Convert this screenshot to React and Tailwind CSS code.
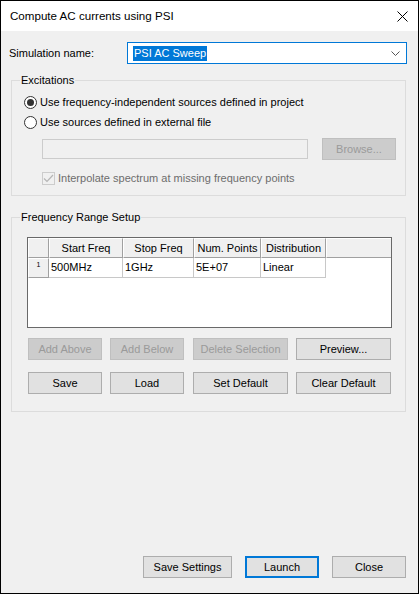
import React from 'react';

const font = { fontFamily: '"Liberation Sans", Arial, sans-serif' };

const Btn = ({ children, w, disabled, primary }) => (
    <div
        className={
            'h-[22px] flex items-center justify-center text-[11px] shrink-0 ' +
            (disabled
                ? 'bg-[#cccccc] border border-[#bfbfbf] text-[#9a9a9a]'
                : primary
                ? 'bg-[#e1e1e1] border-2 border-[#0078d7] text-black'
                : 'bg-[#e1e1e1] border border-[#adadad] text-black')
        }
        style={{ width: w }}
    >
        {children}
    </div>
);

const Radio = ({ checked, label }) => (
    <div className="flex items-center h-[16px]">
        <div className="w-[13px] h-[13px] rounded-full border border-[#333333] bg-white flex items-center justify-center">
            {checked && <div className="w-[7px] h-[7px] rounded-full bg-[#333333]" />}
        </div>
        <span className="ml-[3px] text-[11px] text-black">{label}</span>
    </div>
);

const HeadCell = ({ children, w }) => (
    <div
        className="h-full flex items-center justify-center bg-[#f0f0f0] border-l border-t border-white border-r border-r-[#a0a0a0] border-b border-b-[#a0a0a0] shrink-0"
        style={{ width: w }}
    >
        {children}
    </div>
);

const DataCell = ({ children, w }) => (
    <div
        className="h-full flex items-center pl-[2px] bg-white border-r border-b border-[#c8c8c8] shrink-0"
        style={{ width: w }}
    >
        {children}
    </div>
);

export default function App() {
    return (
        <div className="w-[419px] h-[594px] border border-black bg-[#f0f0f0] flex flex-col" style={font}>
            {/* title bar */}
            <div className="h-[30px] bg-white flex items-center justify-between pl-[9px] pr-[10px] shrink-0">
                <span className="text-[11.6px] text-black">Compute AC currents using PSI</span>
                <svg width="11" height="11" viewBox="0 0 11 11">
                    <path d="M0.5 0.5 L10.5 10.5 M10.5 0.5 L0.5 10.5" stroke="#000" strokeWidth="1" />
                </svg>
            </div>

            {/* simulation name */}
            <div className="flex items-center mt-[11px] pl-[8px] h-[22px]">
                <span className="text-[11px] w-[118px]">Simulation name:</span>
                <div className="w-[280px] h-[22px] bg-white border border-[#0078d7] flex items-center justify-between pl-[5px] pr-[6px]">
                    <span className="bg-[#0078d7] text-white text-[11px] leading-[15px] px-[1px]">PSI AC Sweep</span>
                    <svg width="9" height="5" viewBox="0 0 9 5">
                        <path d="M0.5 0.5 L4.5 4.5 L8.5 0.5" stroke="#555" fill="none" strokeWidth="1" />
                    </svg>
                </div>
            </div>

            {/* excitations */}
            <fieldset className="mt-[8px] ml-[10px] w-[395px] border border-[#dcdcdc]">
                <legend className="text-[11px] leading-[16px] px-[1px] ml-[8px]">Excitations</legend>
                <div className="pl-[12px] pb-[9px]">
                    <div className="mt-[6px] flex flex-col gap-[4px]">
                        <Radio checked label="Use frequency-independent sources defined in project" />
                        <Radio label="Use sources defined in external file" />
                    </div>
                    <div className="mt-[8px] ml-[18px] h-[22px] flex items-center">
                        <div className="w-[266px] h-[20px] border border-[#cccccc] bg-[#f0f0f0]" />
                        <div className="ml-[14px]">
                            <Btn w={74} disabled>Browse...</Btn>
                        </div>
                    </div>
                    <div className="mt-[10px] ml-[18px] h-[16px] flex items-center">
                        <div className="w-[13px] h-[13px] border border-[#cccccc] bg-[#f0f0f0] flex items-center justify-center">
                            <svg width="11" height="9" viewBox="0 0 11 9">
                                <path d="M1 4.5 L4 7.5 L10 1" stroke="#b5b5b5" fill="none" strokeWidth="1.2" />
                            </svg>
                        </div>
                        <span className="ml-[3px] text-[11px] text-[#6d6d6d]">Interpolate spectrum at missing frequency points</span>
                    </div>
                </div>
            </fieldset>

            {/* frequency range setup */}
            <fieldset className="mt-[13px] ml-[10px] w-[395px] border border-[#dcdcdc]">
                <legend className="text-[11px] leading-[16px] px-[1px] ml-[8px]">Frequency Range Setup</legend>
                <div className="pl-[15px] pb-[17px]">
                    <div className="mt-[12px] w-[365px] h-[91px] border border-[#696969] bg-white flex flex-col text-[11px]">
                        <div className="h-[20px] flex bg-[#f0f0f0]">
                            <HeadCell w={21} />
                            <HeadCell w={74}>Start Freq</HeadCell>
                            <HeadCell w={71}>Stop Freq</HeadCell>
                            <HeadCell w={67}>Num. Points</HeadCell>
                            <HeadCell w={65}>Distribution</HeadCell>
                            <div className="h-full flex-1 bg-[#f0f0f0] border-l border-t border-white border-b border-b-[#a0a0a0]" />
                        </div>
                        <div className="h-[20px] flex">
                            <div className="w-[21px] h-full bg-[#f0f0f0] border-l border-t border-white border-r border-r-[#a0a0a0] border-b border-b-[#a0a0a0] text-[7px] flex justify-center pt-[1px] shrink-0">
                                1
                            </div>
                            <DataCell w={74}>500MHz</DataCell>
                            <DataCell w={71}>1GHz</DataCell>
                            <DataCell w={67}>5E+07</DataCell>
                            <DataCell w={65}>Linear</DataCell>
                        </div>
                    </div>
                    <div className="mt-[10px] ml-[1px] flex">
                        <Btn w={74} disabled>Add Above</Btn>
                        <div className="ml-[8px]"><Btn w={74} disabled>Add Below</Btn></div>
                        <div className="ml-[9px]"><Btn w={95} disabled>Delete Selection</Btn></div>
                        <div className="ml-[8px]"><Btn w={95}>Preview...</Btn></div>
                    </div>
                    <div className="mt-[12px] ml-[1px] flex">
                        <Btn w={74}>Save</Btn>
                        <div className="ml-[8px]"><Btn w={74}>Load</Btn></div>
                        <div className="ml-[9px]"><Btn w={95}>Set Default</Btn></div>
                        <div className="ml-[8px]"><Btn w={95}>Clear Default</Btn></div>
                    </div>
                </div>
            </fieldset>

            <div className="flex-1" />

            {/* bottom buttons */}
            <div className="flex justify-end gap-[13px] pr-[12px] pb-[15px]">
                <Btn w={89}>Save Settings</Btn>
                <Btn w={74} primary>Launch</Btn>
                <Btn w={74}>Close</Btn>
            </div>
        </div>
    );
}
